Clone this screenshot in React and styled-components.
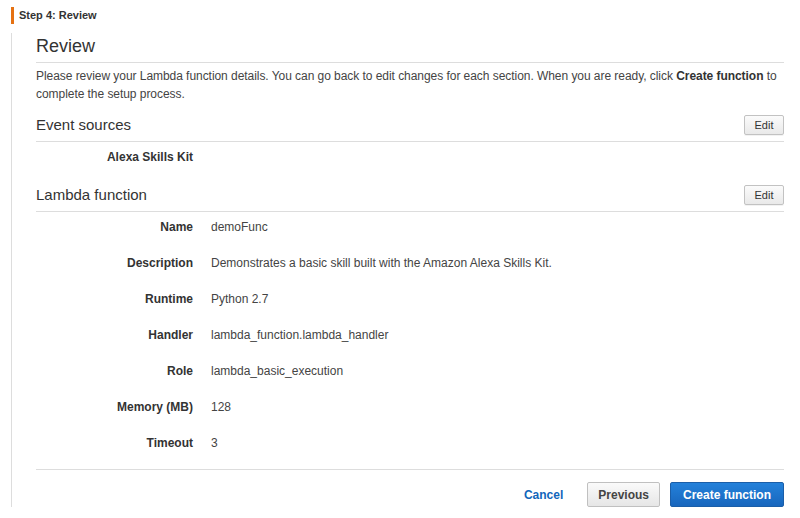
import React from "react";
import styled, { createGlobalStyle } from "styled-components";

const GlobalStyle = createGlobalStyle`
  body {
    margin: 0;
    background: #fff;
    font-family: "Liberation Sans", Arial, sans-serif;
    font-size: 12px;
    color: #444;
  }
`;

const Page = styled.div`
  padding: 7px 16px 0 11px;
`;

const StepHeader = styled.div`
  border-left: 3px solid #e57112;
  padding-left: 5px;
  height: 17px;
  line-height: 17px;
  font-size: 11px;
  font-weight: bold;
  color: #333;
`;

const Panel = styled.div`
  margin-top: 9px;
  border-left: 1px solid #ddd;
  padding: 2px 0 0 24px;
  height: 474px;
  box-sizing: border-box;
`;

const Heading = styled.h1`
  margin: 0;
  font-size: 18px;
  font-weight: normal;
  line-height: 22px;
  color: #333;
  padding-bottom: 5px;
  border-bottom: 1px solid #ddd;
`;

const Intro = styled.p`
  margin: 4px 0 0;
  line-height: 18px;
  letter-spacing: -0.05px;
  color: #444;

  b {
    color: #333;
  }
`;

const SectionHeader = styled.div`
  display: flex;
  align-items: center;
  justify-content: space-between;
  margin-top: ${(p) => p.$gap}px;
  padding-bottom: 6px;
  border-bottom: 1px solid #ddd;
`;

const SectionTitle = styled.h2`
  margin: 0;
  font-size: 15px;
  font-weight: normal;
  line-height: 20px;
  color: #333;
`;

const EditButton = styled.button`
  height: 20px;
  width: 40px;
  padding: 0;
  font-family: inherit;
  font-size: 11px;
  color: #333;
  border: 1px solid #c2c2c2;
  border-radius: 2px;
  background: linear-gradient(#fbfbfb, #e9e9e9);
  box-shadow: 0 1px 0 rgba(0, 0, 0, 0.05);
`;

const DetailRow = styled.div`
  display: flex;
  gap: 18px;
  padding: 7px 0 13px;
  line-height: 16px;
`;

const Label = styled.div`
  width: 157px;
  flex-shrink: 0;
  text-align: right;
  font-weight: bold;
  color: #333;
`;

const Value = styled.div`
  color: #444;
`;

const Footer = styled.div`
  display: flex;
  justify-content: flex-end;
  align-items: center;
  margin-top: 5px;
  padding-top: 12px;
  border-top: 1px solid #ddd;
`;

const CancelLink = styled.a`
  font-weight: bold;
  color: #1166bb;
  margin-right: 24px;
  cursor: pointer;
`;

const ActionButton = styled.button`
  height: 25px;
  padding: 0 ${(p) => (p.$primary ? 12 : 10)}px;
  margin-left: ${(p) => (p.$primary ? 10 : 0)}px;
  font-family: inherit;
  font-size: 12px;
  font-weight: bold;
  border-radius: 2px;
  color: ${(p) => (p.$primary ? "#fff" : "#444")};
  border: 1px solid ${(p) => (p.$primary ? "#1b5ea8" : "#c0c0c0")};
  background: ${(p) =>
    p.$primary
      ? "linear-gradient(#2481da, #1866bd)"
      : "linear-gradient(#fafafa, #e6e6e6)"};
`;

const lambdaRows = [
  ["Name", "demoFunc"],
  ["Description", "Demonstrates a basic skill built with the Amazon Alexa Skills Kit."],
  ["Runtime", "Python 2.7"],
  ["Handler", "lambda_function.lambda_handler"],
  ["Role", "lambda_basic_execution"],
  ["Memory (MB)", "128"],
  ["Timeout", "3"],
];

export default function App() {
  return (
    <Page>
      <GlobalStyle />
      <StepHeader>Step 4: Review</StepHeader>
      <Panel>
        <Heading>Review</Heading>
        <Intro>
          Please review your Lambda function details. You can go back to edit changes for each
          section. When you are ready, click <b>Create function</b> to complete the setup process.
        </Intro>

        <SectionHeader $gap={12}>
          <SectionTitle>Event sources</SectionTitle>
          <EditButton>Edit</EditButton>
        </SectionHeader>
        <DetailRow>
          <Label>Alexa Skills Kit</Label>
        </DetailRow>

        <SectionHeader $gap={7}>
          <SectionTitle>Lambda function</SectionTitle>
          <EditButton>Edit</EditButton>
        </SectionHeader>
        {lambdaRows.map(([label, value]) => (
          <DetailRow key={label}>
            <Label>{label}</Label>
            <Value>{value}</Value>
          </DetailRow>
        ))}

        <Footer>
          <CancelLink>Cancel</CancelLink>
          <ActionButton>Previous</ActionButton>
          <ActionButton $primary>Create function</ActionButton>
        </Footer>
      </Panel>
    </Page>
  );
}
